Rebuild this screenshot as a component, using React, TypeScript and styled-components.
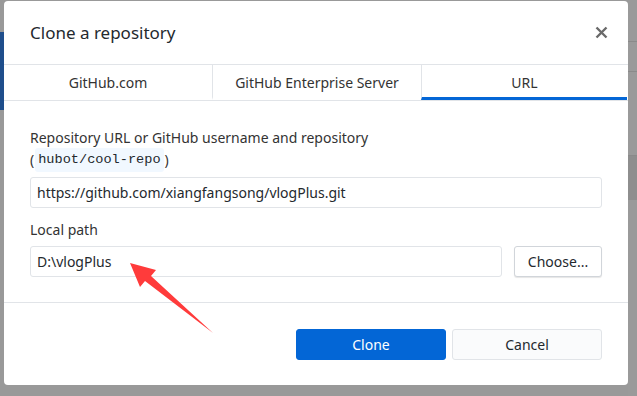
import React from "react";
import styled, { createGlobalStyle } from "styled-components";

const Global = createGlobalStyle`
  html, body { margin: 0; padding: 0; }
  body { font-family: "Noto Sans", "Liberation Sans", sans-serif; background: #999999; }
  * { box-sizing: border-box; }
`;

const Screen = styled.div`
  position: relative;
  width: 637px;
  height: 396px;
  overflow: hidden;
  display: grid;
  grid-template-columns: 4px 624px 1fr;
  background: #999999;
`;

const LeftStrip = styled.div`
  display: grid;
  grid-template-rows: 32px 78px 1fr;
  background: #999999;
`;

const BlueBlock = styled.div`
  grid-row: 2;
  background: #1f4e8c;
`;

const RightStrip = styled.div`
  display: grid;
  grid-template-rows: 41px 30px 84px 45px 1fr;
  background: #9a9a9a;
`;

const StripRow = styled.div<{ $dark?: boolean }>`
  border-top: 1px solid #8a8a8a;
  background: ${(p) => (p.$dark ? "#8e8e8e" : "transparent")};
`;

const DialogSlot = styled.div`
  padding: 1px 0 11px;
`;

const Dialog = styled.div`
  height: 100%;
  background: #ffffff;
  border-radius: 4px;
  display: flex;
  flex-direction: column;
  color: #24292e;
`;

const Header = styled.div`
  height: 63px;
  display: flex;
  align-items: center;
  justify-content: space-between;
  padding: 0 20px 0 26px;
`;

const Title = styled.h1`
  margin: 0;
  font-size: 17px;
  font-weight: 400;
  color: #24292e;
`;

const CloseButton = styled.button`
  border: none;
  background: none;
  padding: 0;
  width: 14px;
  height: 14px;
  display: flex;
  align-items: center;
  justify-content: center;
  color: #6a6a6a;
`;

const Tabs = styled.div`
  display: grid;
  grid-template-columns: 208px 209px 1fr;
  height: 37px;
  border-top: 1px solid #e1e4e8;
  border-bottom: 1px solid #e1e4e8;
`;

const Tab = styled.div<{ $active?: boolean; $first?: boolean }>`
  display: flex;
  align-items: center;
  justify-content: center;
  font-size: 14px;
  color: #333333;
  border-left: ${(p) => (p.$first ? "none" : "1px solid #e1e4e8")};
  border-bottom: 3px solid ${(p) => (p.$active ? "#0366d6" : "transparent")};
  padding-top: 3px;
  margin-right: ${(p) => (p.$active ? "1px" : "0")};
`;

const Content = styled.div`
  padding: 27px 26px 25px;
  display: flex;
  flex-direction: column;
  border-bottom: 1px solid #e1e4e8;
`;

const Label = styled.div`
  font-size: 14px;
  line-height: 20px;
  color: #333333;
`;

const Hint = styled.div`
  font-size: 14px;
  line-height: 24px;
  color: #333333;
  display: flex;
  align-items: center;
  margin-bottom: 5px;
`;

const Code = styled.code`
  font-family: "Liberation Mono", "DejaVu Sans Mono", monospace;
  font-size: 13.6px;
  background: #f1f8ff;
  border-radius: 3px;
  padding: 0 3px;
  height: 24px;
  line-height: 24px;
  margin: 0 1px;
  color: #24292e;
`;

const Row = styled.div`
  display: flex;
  gap: 12px;
`;

const Input = styled.input`
  flex: 1 1 auto;
  min-width: 0;
  height: 31px;
  border: 1px solid #e1e4e8;
  border-radius: 3px;
  padding: 0 6px;
  font-family: "Noto Sans", "Liberation Sans", sans-serif;
  font-size: 14px;
  color: #24292e;
  background: #fff;
  outline: none;
`;

const Spacer = styled.div<{ $h: number }>`
  height: ${(p) => p.$h}px;
  flex: none;
`;

const Button = styled.button<{ $primary?: boolean; $w: number }>`
  width: ${(p) => p.$w}px;
  height: 31px;
  border-radius: 3px;
  font-family: "Noto Sans", "Liberation Sans", sans-serif;
  font-size: 14px;
  padding: 0;
  border: 1px solid ${(p) => (p.$primary ? "#0366d6" : "#e1e4e8")};
  background: ${(p) => (p.$primary ? "#0366d6" : "#fafbfc")};
  color: ${(p) => (p.$primary ? "#ffffff" : "#24292e")};
`;

const ChooseButton = styled(Button)`
  background: #ffffff;
  border-color: #d1d5da;
  box-shadow: 0 1px 1px rgba(0, 0, 0, 0.1);
`;

const Footer = styled.div`
  flex: 1;
  display: flex;
  justify-content: flex-end;
  align-items: center;
  gap: 6px;
  padding: 0 26px 0 26px;
`;

const Annotation = styled.svg`
  position: absolute;
  left: 0;
  top: 0;
  pointer-events: none;
`;

export default function App() {
  return (
    <>
      <Global />
      <Screen>
        <LeftStrip>
          <BlueBlock />
        </LeftStrip>
        <DialogSlot>
          <Dialog>
            <Header>
              <Title>Clone a repository</Title>
              <CloseButton aria-label="Close">
                <svg width="13" height="13" viewBox="0 0 13 13">
                  <path d="M1.5 1.5 L11.5 11.5 M11.5 1.5 L1.5 11.5" stroke="currentColor" strokeWidth="2.4" strokeLinecap="butt" />
                </svg>
              </CloseButton>
            </Header>
            <Tabs>
              <Tab $first>GitHub.com</Tab>
              <Tab>GitHub Enterprise Server</Tab>
              <Tab $active>URL</Tab>
            </Tabs>
            <Content>
              <Label>Repository URL or GitHub username and repository</Label>
              <Hint>
                (<Code>hubot/cool-repo</Code>)
              </Hint>
              <Input readOnly value="https://github.com/xiangfangsong/vlogPlus.git" />
              <Spacer $h={12} />
              <Label>Local path</Label>
              <Spacer $h={6} />
              <Row>
                <Input readOnly value="D:\vlogPlus" />
                <ChooseButton $w={88}>Choose...</ChooseButton>
              </Row>
            </Content>
            <Footer>
              <Button $primary $w={150}>Clone</Button>
              <Button $w={150}>Cancel</Button>
            </Footer>
          </Dialog>
        </DialogSlot>
        <RightStrip>
          <div />
          <StripRow />
          <StripRow />
          <StripRow $dark />
          <div />
        </RightStrip>
        <Annotation width="637" height="396" viewBox="0 0 637 396">
          <polygon
            points="130,263 156,270 151,276 213,333 145,281 140,287"
            fill="#ff3b3b"
          />
        </Annotation>
      </Screen>
    </>
  );
}
